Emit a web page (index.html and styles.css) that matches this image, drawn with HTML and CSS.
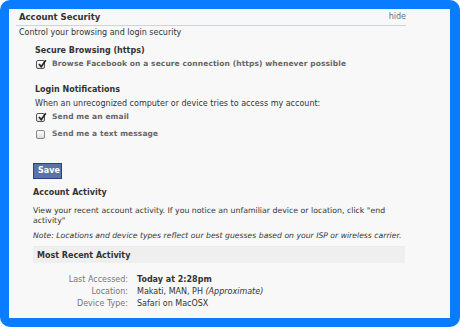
FILE: index.html
```html
<!DOCTYPE html>
<html>
<head>
<meta charset="utf-8">
<link rel="stylesheet" href="styles.css">
</head>
<body>
<div class="frame">
  <div class="panel">
    <div class="header">
      <span class="title">Account Security</span>
      <a class="hide">hide</a>
    </div>
    <p class="intro">Control your browsing and login security</p>
    <div class="section">
      <h3 class="sub">Secure Browsing (https)</h3>
      <label class="check"><span class="box on"><svg viewBox="0 0 10 10" width="10" height="10"><path d="M2 5 L4.2 7.6 L8.8 1.2" fill="none" stroke="#222" stroke-width="1.6"/></svg></span><span class="ctext">Browse Facebook on a secure connection (https) whenever possible</span></label>
    </div>
    <div class="section second">
      <h3 class="sub">Login Notifications</h3>
      <p class="line">When an unrecognized computer or device tries to access my account:</p>
      <label class="check"><span class="box on"><svg viewBox="0 0 10 10" width="10" height="10"><path d="M2 5 L4.2 7.6 L8.8 1.2" fill="none" stroke="#222" stroke-width="1.6"/></svg></span><span class="ctext">Send me an email</span></label>
      <label class="check"><span class="box"></span><span class="ctext">Send me a text message</span></label>
    </div>
    <div class="activity">
      <button class="save">Save</button>
      <h3 class="sub2">Account Activity</h3>
      <p class="desc">View your recent account activity. If you notice an unfamiliar device or location, click "end activity"</p>
      <p class="note">Note: Locations and device types reflect our best guesses based on your ISP or wireless carrier.</p>
      <div class="bar">Most Recent Activity</div>
      <div class="rows">
        <span class="lbl">Last Accessed:</span><span class="val strong">Today at 2:28pm</span>
        <span class="lbl">Location:</span><span class="val">Makati, MAN, PH <i>(Approximate)</i></span>
        <span class="lbl">Device Type:</span><span class="val">Safari on MacOSX</span>
      </div>
    </div>
  </div>
</div>
</body>
</html>
```
FILE: styles.css
```css
* { box-sizing: border-box; }
html, body { margin: 0; padding: 0; background: #fff; }
body { width: 460px; height: 327px; overflow: hidden; font-family: "DejaVu Sans", sans-serif; font-size: 8px; line-height: 10px; color: #333; }
.frame { width: 460px; height: 327px; background: #0a7cff; border-radius: 10px; padding: 9px 10px 9px 9px; }
.panel { background: #f8f8f8; height: 100%; padding: 0 0 0 10px; }
.header { display: flex; justify-content: space-between; align-items: flex-end; width: 390px; margin-left: -3px; padding: 3px 0 3px 3px; border-bottom: 1px solid #ccd2de; }
.title { font-weight: bold; font-size: 8.5px; color: #333; }
.hide { color: #5a6f96; font-size: 8px; }
.intro { margin: 2px 0 0; }
.section { padding-left: 16px; margin-top: 8px; }
.section.second { margin-top: 14px; }
.sub { margin: 0; font-size: 8px; font-weight: bold; color: #333; }
.line { margin: 4px 0 0; }
.check { display: flex; align-items: center; margin: 1px 0 0 1px; height: 14px; }
.check + .check { margin-top: 3px; }
.box { width: 9px; height: 9px; border: 1px solid #888; border-radius: 2px; background: linear-gradient(#fff, #ddd); position: relative; margin-right: 7px; flex: none; }
.box.on { border-color: #555; }
.box svg { position: absolute; left: 0; top: -2px; }
.ctext { color: #666; font-weight: bold; font-size: 7.5px; letter-spacing: 0.1px; }
.activity { padding-left: 14px; margin-top: 22px; }
.save { display: block; font-family: inherit; font-size: 8px; line-height: 10px; font-weight: bold; color: #fff; background: #5b74a8; border: 1px solid #29447e; padding: 2px 4px; height: 16px; width: 29px; margin: 0; }
.sub2 { margin: 9px 0 0; font-size: 8px; font-weight: bold; }
.desc { margin: 8px 0 0; width: 370px; font-size: 7.8px; }
.note { margin: 5px 0 0; font-style: italic; font-size: 7.7px; }
.bar { width: 372px; margin-top: 5px; background: #efefef; font-weight: bold; padding: 4px 4px 0; height: 17px; border-top: 1px solid #ececec; }
.rows { display: grid; grid-template-columns: 95px auto; column-gap: 9px; row-gap: 2px; margin-top: 12px; }
.lbl { text-align: right; color: #777; }
.val { color: #333; }
.val.strong { font-weight: bold; }
```
